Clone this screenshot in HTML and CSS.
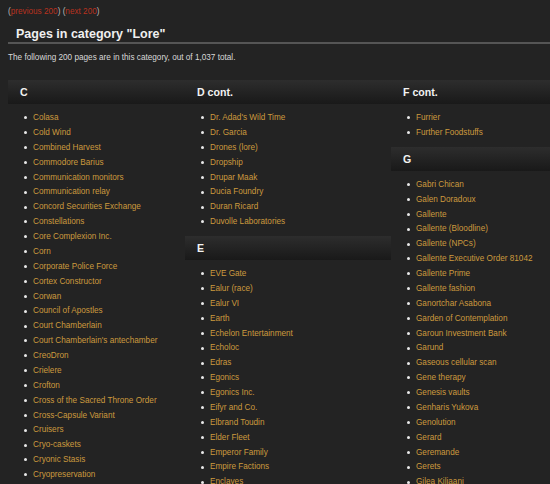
FILE: index.html
```html
<!DOCTYPE html>
<html lang="en">
<head>
    <meta charset="UTF-8">
    <title>Category:Lore</title>
    <link rel="stylesheet" href="styles.css">
</head>
<body>
    <div class="page">
        <div class="nav">(<a href="#">previous 200</a>) (<a href="#">next 200</a>)</div>

        <h1>Pages in category "Lore"</h1>

        <p class="summary">The following 200 pages are in this category, out of 1,037 total.</p>

        <div class="columns">
            <div class="col">
                <h3>C</h3>
                <ul>
                    <li><a href="#">Colasa</a></li>
                    <li><a href="#">Cold Wind</a></li>
                    <li><a href="#">Combined Harvest</a></li>
                    <li><a href="#">Commodore Barius</a></li>
                    <li><a href="#">Communication monitors</a></li>
                    <li><a href="#">Communication relay</a></li>
                    <li><a href="#">Concord Securities Exchange</a></li>
                    <li><a href="#">Constellations</a></li>
                    <li><a href="#">Core Complexion Inc.</a></li>
                    <li><a href="#">Corn</a></li>
                    <li><a href="#">Corporate Police Force</a></li>
                    <li><a href="#">Cortex Constructor</a></li>
                    <li><a href="#">Corwan</a></li>
                    <li><a href="#">Council of Apostles</a></li>
                    <li><a href="#">Court Chamberlain</a></li>
                    <li><a href="#">Court Chamberlain's antechamber</a></li>
                    <li><a href="#">CreoDron</a></li>
                    <li><a href="#">Crielere</a></li>
                    <li><a href="#">Crofton</a></li>
                    <li><a href="#">Cross of the Sacred Throne Order</a></li>
                    <li><a href="#">Cross-Capsule Variant</a></li>
                    <li><a href="#">Cruisers</a></li>
                    <li><a href="#">Cryo-caskets</a></li>
                    <li><a href="#">Cryonic Stasis</a></li>
                    <li><a href="#">Cryopreservation</a></li>
                </ul>
            </div>

            <div class="col">
                <h3>D cont.</h3>
                <ul>
                    <li><a href="#">Dr. Adad's Wild Time</a></li>
                    <li><a href="#">Dr. Garcia</a></li>
                    <li><a href="#">Drones (lore)</a></li>
                    <li><a href="#">Dropship</a></li>
                    <li><a href="#">Drupar Maak</a></li>
                    <li><a href="#">Ducia Foundry</a></li>
                    <li><a href="#">Duran Ricard</a></li>
                    <li><a href="#">Duvolle Laboratories</a></li>
                </ul>
                <h3>E</h3>
                <ul>
                    <li><a href="#">EVE Gate</a></li>
                    <li><a href="#">Ealur (race)</a></li>
                    <li><a href="#">Ealur VI</a></li>
                    <li><a href="#">Earth</a></li>
                    <li><a href="#">Echelon Entertainment</a></li>
                    <li><a href="#">Echoloc</a></li>
                    <li><a href="#">Edras</a></li>
                    <li><a href="#">Egonics</a></li>
                    <li><a href="#">Egonics Inc.</a></li>
                    <li><a href="#">Eifyr and Co.</a></li>
                    <li><a href="#">Elbrand Toudin</a></li>
                    <li><a href="#">Elder Fleet</a></li>
                    <li><a href="#">Emperor Family</a></li>
                    <li><a href="#">Empire Factions</a></li>
                    <li><a href="#">Enclaves</a></li>
                </ul>
            </div>

            <div class="col">
                <h3>F cont.</h3>
                <ul>
                    <li><a href="#">Furrier</a></li>
                    <li><a href="#">Further Foodstuffs</a></li>
                </ul>
                <h3>G</h3>
                <ul>
                    <li><a href="#">Gabri Chican</a></li>
                    <li><a href="#">Galen Doradoux</a></li>
                    <li><a href="#">Gallente</a></li>
                    <li><a href="#">Gallente (Bloodline)</a></li>
                    <li><a href="#">Gallente (NPCs)</a></li>
                    <li><a href="#">Gallente Executive Order 81042</a></li>
                    <li><a href="#">Gallente Prime</a></li>
                    <li><a href="#">Gallente fashion</a></li>
                    <li><a href="#">Ganortchar Asabona</a></li>
                    <li><a href="#">Garden of Contemplation</a></li>
                    <li><a href="#">Garoun Investment Bank</a></li>
                    <li><a href="#">Garund</a></li>
                    <li><a href="#">Gaseous cellular scan</a></li>
                    <li><a href="#">Gene therapy</a></li>
                    <li><a href="#">Genesis vaults</a></li>
                    <li><a href="#">Genharis Yukova</a></li>
                    <li><a href="#">Genolution</a></li>
                    <li><a href="#">Gerard</a></li>
                    <li><a href="#">Geremande</a></li>
                    <li><a href="#">Gerets</a></li>
                    <li><a href="#">Gilea Kiliaani</a></li>
                </ul>
            </div>
        </div>
    </div>
</body>
</html>
```

FILE: styles.css
```css
* {
    margin: 0;
    padding: 0;
    font-family: "Liberation Sans", Arial, sans-serif;
}

body {
    background-color: #232323;
    color: #d8d8d8;
    overflow: hidden;
}

a {
    text-decoration: none;
}

.page {
    padding: 6px 0 0 8px;
    height: 478px;
    overflow: hidden;
}

.nav {
    font-size: 8.2px;
    line-height: 12px;
    color: #bbb;
}

.nav a {
    color: #b8321f;
}

h1 {
    margin-top: 8px;
    padding-left: 8px;
    font-size: 12.5px;
    line-height: 16px;
    font-weight: bold;
    color: #f0f0f0;
    border-bottom: solid 2px #555;
}

.summary {
    margin-top: 8px;
    font-size: 8.2px;
    line-height: 12px;
    color: #d8d8d8;
}

.columns {
    display: grid;
    grid-template-columns: 177px 206px 1fr;
    margin-top: 16px;
}

.col {
    min-width: 0;
}

.col h3 {
    height: 24px;
    line-height: 24px;
    padding-left: 12px;
    font-size: 10.6px;
    font-weight: bold;
    color: #f2f2f2;
    background: linear-gradient(#2d2d2d, #191919);
}

.col ul {
    list-style: none;
    padding: 7px 0 6px 16px;
}

.col li {
    font-size: 8.2px;
    line-height: 14.875px;
    white-space: nowrap;
}

.col li::before {
    content: "";
    display: inline-block;
    width: 3px;
    height: 3px;
    margin-right: 6px;
    border-radius: 50%;
    background-color: #e8e8e8;
    vertical-align: middle;
}

.col li a {
    color: #cc9a3e;
}
```
